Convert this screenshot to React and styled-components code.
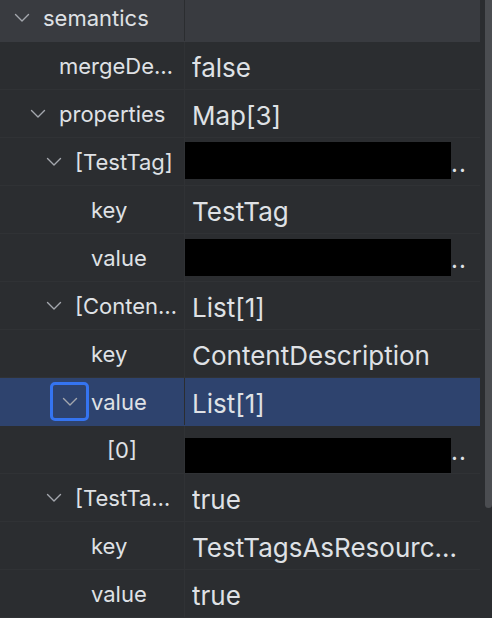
import React from 'react'
import styled, { createGlobalStyle, css } from 'styled-components'

const GlobalStyle = createGlobalStyle`
  html, body {
    margin: 0;
    padding: 0;
    background-color: #2b2d30;
  }
  *, *::before, *::after {
    box-sizing: border-box;
  }
`;

const Panel = styled.div`
  display: flex;
  width: 492px;
  height: 618px;
  overflow: hidden;
  background-color: #2b2d30;
  font-family: Inter, "Noto Sans", sans-serif;
  color: #dfe1e5;
`;

const Tree = styled.div`
  flex: 1;
  display: flex;
  flex-direction: column;
  margin-top: -6px;
`;

const Gutter = styled.div`
  width: 12px;
  display: flex;
  justify-content: flex-end;
`;

const Thumb = styled.div`
  width: 7px;
  height: 508px;
  background-color: #4b4d51;
  border-radius: 0 0 4px 4px;
`;

const Row = styled.div`
  display: grid;
  grid-template-columns: 185px 1fr;
  flex: none;
  height: 48px;
  border-bottom: 1px solid #303235;
  ${(p) => p.$header && css`
    background-color: #393b40;
    border-bottom-color: #393b40;
  `}
  ${(p) => p.$selected && css`
    background-color: #2e436e;
    border-bottom-color: #2e436e;
  `}
`;

const NameCell = styled.div`
  display: flex;
  align-items: center;
  min-width: 0;
  padding-left: ${(p) => 14 + p.$level * 16}px;
  padding-right: 6px;
  border-right: 1px solid ${(p) => (p.$strong ? '#2b2d30' : '#303235')};
  white-space: nowrap;
  font-size: 22px;
`;

const Label = styled.span`
  overflow: hidden;
  text-overflow: ellipsis;
  min-width: 0;
`;

const ChevronSlot = styled.span`
  position: relative;
  flex: none;
  width: 29px;
  height: 16px;
  display: flex;
  align-items: center;
  ${(p) => p.$focused && css`
    &::after {
      content: '';
      position: absolute;
      left: -12px;
      top: -12px;
      width: 39px;
      height: 39px;
      border: 3px solid #3574f0;
      border-radius: 5px;
    }
  `}
`;

const Spacer = styled.span`
  flex: none;
  width: 29px;
`;

const ValueCell = styled.div`
  display: flex;
  align-items: center;
  min-width: 0;
  padding-left: ${(p) => (p.$redacted ? 0 : 7)}px;
  padding-right: 18px;
  padding-top: 3px;
  white-space: nowrap;
  overflow: hidden;
  font-size: 26px;
`;

const ValueText = styled.span`
  overflow: hidden;
  text-overflow: ellipsis;
  min-width: 0;
`;

const Redacted = styled.span`
  flex: none;
  width: 266px;
  height: 37px;
  background-color: #000;
  margin-top: ${(p) => p.$shift * 2 - 3}px;
`;

const Dots = styled.span`
  font-size: 24px;
  letter-spacing: 1px;
`;

function Chevron() {
  return (
    <svg width="16" height="16" viewBox="0 0 16 16" fill="none">
      <polyline points="1.5,4.5 8,11 14.5,4.5" stroke="#a4a7ad" strokeWidth="1.4" strokeLinecap="round" strokeLinejoin="round" />
    </svg>
  )
}

const rows = [
  { name: 'semantics', level: 0, open: true, header: true },
  { name: 'mergeDescendants', level: 1, value: 'false' },
  { name: 'properties', level: 1, open: true, value: 'Map[3]' },
  { name: '[TestTag]', level: 2, open: true, redacted: true, shift: -1 },
  { name: 'key', level: 3, value: 'TestTag' },
  { name: 'value', level: 3, redacted: true, shift: 0 },
  { name: '[ContentDescription]', level: 2, open: true, value: 'List[1]' },
  { name: 'key', level: 3, value: 'ContentDescription' },
  { name: 'value', level: 3, open: true, focused: true, selected: true, value: 'List[1]' },
  { name: '[0]', level: 4, redacted: true, shift: 7 },
  { name: '[TestTagsAsResourceId]', level: 2, open: true, value: 'true' },
  { name: 'key', level: 3, value: 'TestTagsAsResourceId' },
  { name: 'value', level: 3, value: 'true' },
];

export default function App() {
  return (
    <>
      <GlobalStyle />
      <Panel>
        <Tree>
          {rows.map((r, i) => (
            <Row key={i} $header={r.header} $selected={r.selected}>
              <NameCell $level={r.level} $strong={r.header || r.selected}>
                {r.open ? (
                  <ChevronSlot $focused={r.focused}>
                    <Chevron />
                  </ChevronSlot>
                ) : (
                  <Spacer />
                )}
                <Label>{r.name}</Label>
              </NameCell>
              <ValueCell $redacted={r.redacted}>
                {r.redacted ? (
                  <>
                    <Redacted $shift={r.shift} />
                    <Dots>..</Dots>
                  </>
                ) : (
                  <ValueText>{r.value}</ValueText>
                )}
              </ValueCell>
            </Row>
          ))}
        </Tree>
        <Gutter>
          <Thumb />
        </Gutter>
      </Panel>
    </>
  )
}
